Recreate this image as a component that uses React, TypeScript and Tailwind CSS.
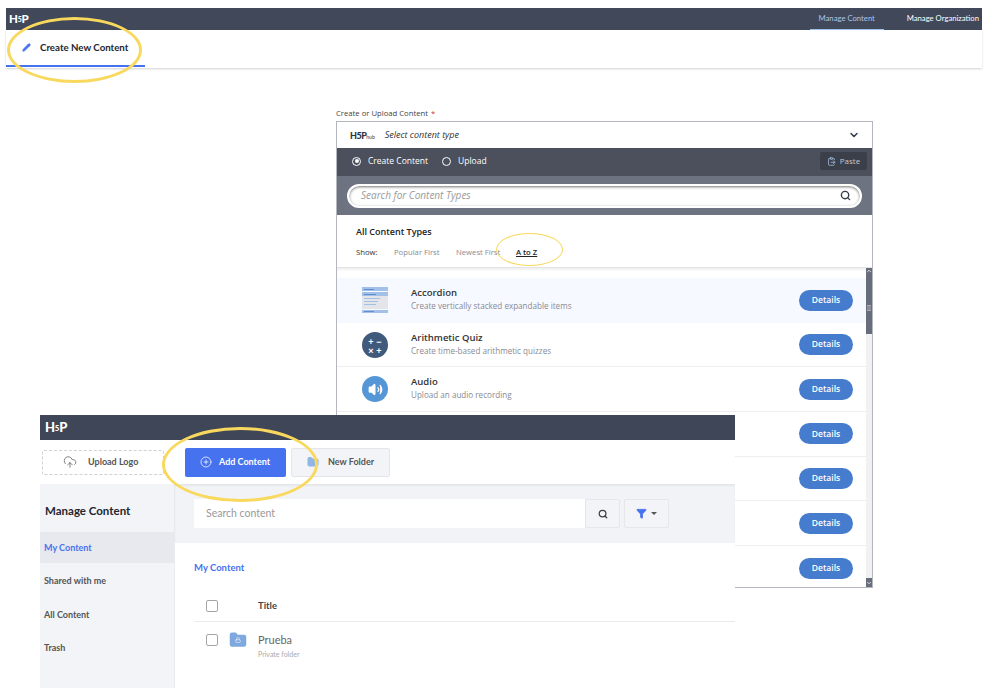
import { ChevronDown, ChevronUp, CirclePlus, ClipboardPaste, CloudUpload, Filter, Folder, Lock, Pencil, Search, Volume2 } from "lucide-react";

const rows = [
  { title: "Accordion", desc: "Create vertically stacked expandable items", icon: "accordion", active: true },
  { title: "Arithmetic Quiz", desc: "Create time-based arithmetic quizzes", icon: "quiz" },
  { title: "Audio", desc: "Upload an audio recording", icon: "audio" },
  { title: "", desc: "" },
  { title: "", desc: "" },
  { title: "", desc: "" },
  { title: "", desc: "" },
];

function Logo({ className }: { className: string }) {
  return (
    <span className={`font-['Lato',sans-serif] font-black leading-none tracking-[-0.2px] text-white ${className}`}>
      H<span className="text-[0.6em] align-[1px]">5</span>P
    </span>
  );
}

function AccordionIcon() {
  return (
    <div className="flex h-[26px] w-[26px] flex-col">
      <div className="flex h-[4px] items-center bg-[#a3c0e8] pl-[2px]">
        <div className="h-px w-[10px] bg-[#5f8fd0]" />
      </div>
      <div className="mt-px flex h-[4px] items-center bg-[#a3c0e8] pl-[2px]">
        <div className="h-px w-[12px] bg-[#5f8fd0]" />
      </div>
      <div className="flex h-[13px] flex-col gap-[2px] bg-[#e3e5e8] px-[2px] pt-[2px]">
        <div className="h-px w-[16px] bg-[#a3c0e8]" />
        <div className="h-px w-[14px] bg-[#a3c0e8]" />
        <div className="h-px w-[12px] bg-[#a3c0e8]" />
      </div>
      <div className="mt-px flex h-[4px] items-center bg-[#a3c0e8] pl-[2px]">
        <div className="h-px w-[10px] bg-[#5f8fd0]" />
      </div>
    </div>
  );
}

function RowIcon({ icon }: { icon?: string }) {
  if (icon === "accordion") return <AccordionIcon />;
  if (icon === "quiz") {
    return (
      <div className="grid h-[26px] w-[26px] grid-cols-2 place-items-center rounded-full bg-[#41597a] px-[5px] py-[6px] font-['Liberation_Sans',sans-serif] text-[9px] font-bold leading-none text-white">
        <span>+</span>
        <span>−</span>
        <span>×</span>
        <span>+</span>
      </div>
    );
  }
  if (icon === "audio") {
    return (
      <div className="flex h-[26px] w-[26px] items-center justify-center rounded-full bg-[#5596d6]">
        <Volume2 size={15} className="fill-white text-white" />
      </div>
    );
  }
  return null;
}

function TopWindow() {
  return (
    <div className="absolute left-[6px] top-[8px] w-[976px]">
      <div className="flex h-[22px] items-center justify-between bg-[#414859] pl-[3px]">
        <Logo className="text-[11.5px]" />
        <div className="flex h-full items-center font-['Lato',sans-serif] text-[7.7px]">
          <div className="flex h-full w-[74px] items-center justify-center border-b border-[#9fc0ee] text-[#a9c4ea]">
            Manage Content
          </div>
          <div className="ml-[23px] mr-[3px] text-white">Manage Organization</div>
        </div>
      </div>
      <div className="h-[38px] bg-white shadow-[0_1px_2px_rgba(0,0,0,0.18)]">
        <div className="flex h-[37px] w-[139px] items-center gap-[9px] border-b-2 border-[#4672ef] pl-[16px]">
          <Pencil size={9} className="fill-[#4672ef] text-[#4672ef]" />
          <span className="font-['Lato',sans-serif] text-[9.7px] font-bold text-[#23262f]">Create New Content</span>
        </div>
      </div>
    </div>
  );
}

function HubPanel() {
  return (
    <div className="absolute left-[336px] top-[108px] w-[537px] font-['Open_Sans',sans-serif]">
      <div className="h-[13px] text-[7.7px] leading-[11px] text-[#444]">
        Create or Upload Content <span className="ml-[1px] text-[#c33]">*</span>
      </div>
      <div className="border border-[#b5b7bf] bg-white">
        <div className="flex h-[26px] items-center pl-[13px] pr-[12px]">
          <span className="font-['Lato',sans-serif] text-[9px] font-black leading-none tracking-[-0.5px] text-[#2d3340]">
            H5P<span className="text-[5px] font-normal tracking-normal">hub</span>
          </span>
          <span className="ml-[10px] text-[9px] italic text-[#333]">Select content type</span>
          <ChevronDown size={12} strokeWidth={3} className="ml-auto text-[#333a48]" />
        </div>
        <div className="flex h-[28px] items-center bg-[#4b505c] pb-[2px] pl-[15px] pr-[5px] text-[8.5px] text-white">
          <span className="flex h-[9px] w-[9px] items-center justify-center rounded-full border border-white">
            <span className="h-[4px] w-[4px] rounded-full bg-white" />
          </span>
          <span className="ml-[7px]">Create Content</span>
          <span className="ml-[14px] h-[9px] w-[9px] rounded-full border border-white" />
          <span className="ml-[7px]">Upload</span>
          <span className="ml-auto flex h-[18px] w-[47px] items-center justify-center gap-[4px] rounded-[2px] bg-[#3b3f4a] text-[8px] text-[#c5c9d1]">
            <ClipboardPaste size={9} className="text-[#a9c4e0]" />
            Paste
          </span>
        </div>
        <div className="flex h-[39px] items-center bg-[#6d7380] px-[10px]">
          <div className="flex h-[24px] w-full items-center justify-between rounded-full border-2 border-white bg-white pl-[12px] pr-[9px] shadow-[inset_0_1px_3px_rgba(0,0,0,0.55)]">
            <span className="text-[10px] italic text-[#9a9a9a]">Search for Content Types</span>
            <Search size={11} strokeWidth={3} className="text-[#333a48]" />
          </div>
        </div>
        <div className="flex h-[52px] flex-col bg-white pl-[19px] pt-[10px]">
          <div className="text-[9px] font-semibold leading-[13px] text-[#222]">All Content Types</div>
          <div className="mt-[9px] flex text-[7.7px] leading-[10px] text-[#8b8b93]">
            <span className="w-[38px] text-[#333]">Show:</span>
            <span className="w-[62px]">Popular First</span>
            <span className="w-[60px]">Newest First</span>
            <span className="font-semibold text-[#222] underline">A to Z</span>
          </div>
        </div>
        <div className="flex h-[320px] border-t border-[#e3e3e6] shadow-[inset_0_2px_2px_rgba(0,0,0,0.06)]">
          <div className="flex-1 overflow-hidden pt-[10px]">
            {rows.map((row, index) => (
              <div
                key={index}
                className={`flex h-[44.7px] items-center pl-[25px] pr-[13px] ${row.active ? "bg-[#f6f9ff]" : "border-b border-[#eeeeef] bg-white last:border-b-0"}`}
              >
                <div className="w-[49px]">
                  <RowIcon icon={row.icon} />
                </div>
                <div className="flex-1 pb-[3px]">
                  <div className="text-[9.5px] font-semibold leading-[13px] text-[#333]">{row.title}</div>
                  <div className="mt-px text-[8.1px] leading-[11px] text-[#8a8a92]">{row.desc}</div>
                </div>
                <div className="flex h-[21px] w-[54px] items-center justify-center rounded-full bg-[#467ccd] text-[8.5px] font-semibold text-white">
                  Details
                </div>
              </div>
            ))}
          </div>
          <div className="flex w-[6px] flex-col bg-[#f1f1f1]">
            <div className="flex h-[66px] flex-col items-center justify-between bg-[#676d7a] text-white">
              <ChevronUp size={6} strokeWidth={3} />
              <div className="mb-[23px] h-[6px] w-[4px] border-y border-[#a6a9b2] bg-[#8a8e99]" />
            </div>
            <div className="mt-auto flex h-[9px] items-center justify-center bg-[#676d7a] text-white">
              <ChevronDown size={6} strokeWidth={3} />
            </div>
          </div>
        </div>
      </div>
    </div>
  );
}

function Checkbox() {
  return <span className="h-[12px] w-[12px] rounded-[2px] border border-[#a5a5a8] bg-white" />;
}

function BottomWindow() {
  const nav = ["Shared with me", "All Content", "Trash"];
  return (
    <div className="absolute left-[40px] top-[415px] flex h-[273px] w-[695px] flex-col overflow-hidden bg-white font-['Lato',sans-serif]">
      <div className="flex h-[25px] items-center bg-[#3f4658] pl-[5px]">
        <Logo className="text-[13px]" />
      </div>
      <div className="flex h-[44px] items-center bg-white pl-[2px] shadow-[0_2px_3px_rgba(0,0,0,0.12)]">
        <div className="flex h-[25px] w-[122px] items-center gap-[11px] rounded-[2px] border border-dashed border-[#cfd1d6] pl-[20px] text-[9px] font-bold text-[#555]">
          <CloudUpload size={14} strokeWidth={1.25} className="text-[#555]" />
          Upload Logo
        </div>
        <div className="ml-[21px] flex h-[29px] w-[101px] items-center gap-[7px] rounded-[2px] bg-[#4672ef] pl-[15px] text-[9px] font-bold text-white">
          <CirclePlus size={12} strokeWidth={1.5} />
          Add Content
        </div>
        <div className="ml-[5px] flex h-[29px] w-[99px] items-center gap-[9px] rounded-[2px] border border-[#e5e6ea] bg-[#f3f4f7] pl-[15px] text-[9px] font-bold text-[#555]">
          <Folder size={12} className="fill-[#8fb6e6] text-[#8fb6e6]" />
          New Folder
        </div>
      </div>
      <div className="flex flex-1">
        <div className="w-[135px] border-r border-[#e9eaee] bg-[#f3f4f7]">
          <div className="flex h-[48px] items-end pb-[13px] pl-[5px] text-[11.5px] font-bold text-[#23262f]">Manage Content</div>
          <div className="mb-[1px] flex h-[31px] items-center bg-[#e8e9ee] pl-[4px] text-[9px] font-bold text-[#4672ef]">My Content</div>
          {nav.map((item) => (
            <div key={item} className="flex h-[33.5px] items-center pl-[4px] text-[9px] font-bold text-[#555]">
              {item}
            </div>
          ))}
        </div>
        <div className="flex flex-1 flex-col">
          <div className="flex h-[59px] items-center gap-[4px] bg-[#f2f3f6] pl-[19px] shadow-[inset_0_2px_2px_rgba(0,0,0,0.05)]">
            <div className="flex h-[29px] w-[391px] items-center bg-white pl-[12px] text-[10.5px] text-[#999]">Search content</div>
            <div className="-ml-[4px] flex h-[29px] w-[35px] items-center justify-center rounded-r-[2px] border border-[#e6e7eb] bg-[#f3f4f7]">
              <Search size={10} strokeWidth={3} className="text-[#3c4048]" />
            </div>
            <div className="flex h-[29px] w-[45px] items-center justify-center gap-[4px] rounded-[2px] border border-[#e6e7eb] bg-[#f3f4f7]">
              <Filter size={11} className="fill-[#4672ef] text-[#4672ef]" />
              <span className="h-0 w-0 border-x-[3px] border-t-[3px] border-x-transparent border-t-[#555]" />
            </div>
          </div>
          <div className="flex-1 bg-white pl-[19px] pt-[18px]">
            <div className="text-[9.5px] font-bold leading-[14px] text-[#4672ef]">My Content</div>
            <div className="mt-[25px] flex h-[22px] items-start border-b border-[#e9eaee] pl-[12px] text-[9.5px] font-bold text-[#444]">
              <Checkbox />
              <span className="ml-[40px] leading-[12px]">Title</span>
            </div>
            <div className="flex pl-[12px] pt-[12px]">
              <Checkbox />
              <div className="relative ml-[11px] h-[12px]">
                <Folder size={18} className="-mt-[3px] fill-[#7fa9de] text-[#7fa9de]" />
                <Lock size={6} className="absolute left-[6px] top-[3px] text-white" />
              </div>
              <div className="ml-[11px]">
                <div className="text-[11px] leading-[12px] text-[#666]">Prueba</div>
                <div className="mt-[3px] text-[7px] leading-[10px] text-[#aaa]">Private folder</div>
              </div>
            </div>
          </div>
        </div>
      </div>
    </div>
  );
}

export default function App() {
  return (
    <div className="relative h-[688px] w-[989px] overflow-hidden bg-white">
      <TopWindow />
      <HubPanel />
      <BottomWindow />
      <div className="absolute left-[7px] top-[17px] h-[66px] w-[135px] rounded-[50%] border-[3px] border-[#f9d85e]" />
      <div className="absolute left-[496px] top-[233px] h-[33px] w-[67px] rounded-[50%] border-[1.5px] border-[#f9d85e]" />
      <div className="absolute left-[162px] top-[427px] h-[75px] w-[156px] rounded-[50%] border-[3px] border-[#f9d85e]" />
    </div>
  );
}
